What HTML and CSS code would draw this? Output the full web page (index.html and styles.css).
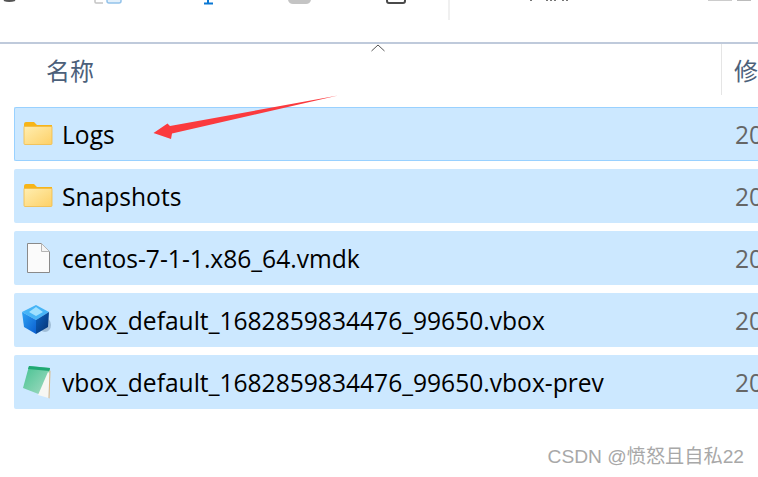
FILE: index.html
```html
<!DOCTYPE html>
<html lang="zh-CN">
<head>
    <meta charset="UTF-8">
    <meta name="viewport" content="width=device-width, initial-scale=1.0">
    <title>Logs</title>
    <link rel="stylesheet" href="styles.css">
</head>
<body>
    <!-- what is left of the ribbon, cut off by the top edge -->
    <svg class="ribbon" width="758" height="42" viewBox="0 0 758 42">
        <path d="M4 0 Q9 2 15 0" fill="none" stroke="#555" stroke-width="2"/>
        <path d="M95 0V2Q95 3 96 3H103" fill="none" stroke="#c4c4c4" stroke-width="1.500"/>
        <path d="M107 0V1Q107 3 109 3H119Q121 3 121 1V0" fill="#e3f0fb" stroke="#93c2ea" stroke-width="1.500"/>
        <path d="M208 0V3M204 3.500H213" fill="none" stroke="#0a78d4" stroke-width="2"/>
        <path d="M288 0Q289 4 293 4H306Q310 4 311 0Z" fill="#c4c4c4"/>
        <path d="M387 0V1Q387 3 389 3H403Q405 3 405 1V0" fill="none" stroke="#4a4a4a" stroke-width="2"/>
        <rect x="448" y="0" width="2" height="20" fill="#f0f0f0"/>
        <path d="M531 0V1M547 0V1M551 0V1M555 0V1M563 0V1M567 0V1" stroke="#777" stroke-width="2"/>
        <rect x="708" y="0" width="24" height="1" fill="#ccc"/>
        <rect x="737" y="0" width="14" height="1" fill="#bbb"/>
    </svg>

    <div class="list-head">
        <svg class="sort-mark" width="16" height="8" viewBox="0 0 16 8">
            <path d="M1.500 7L8 1L14.500 7" fill="none" stroke="#555" stroke-width="1"/>
        </svg>
        <div class="col-name">名称</div>
        <div class="col-date">修</div>
    </div>

    <div class="rows">
        <div class="row focused">
            <svg class="icon" width="30" height="24" viewBox="0 0 30 24"><use href="#folder"/></svg>
            <span class="name">Logs</span>
            <span class="date">20</span>
        </div>
        <div class="row">
            <svg class="icon" width="30" height="24" viewBox="0 0 30 24"><use href="#folder"/></svg>
            <span class="name">Snapshots</span>
            <span class="date">20</span>
        </div>
        <div class="row">
            <svg class="icon" width="30" height="32" viewBox="0 0 30 32">
                <path d="M4.500 1.500H18.500L26.500 9.500V30.500H4.500Z" fill="#fbfbfb" stroke="#8a8a8a" stroke-width="1"/>
                <path d="M18.500 1.500V9.500H26.500Z" fill="#f4f4f4" stroke="#b4b4b4" stroke-width="1"/>
            </svg>
            <span class="name">centos-7-1-1.x86_64.vmdk</span>
            <span class="date">20</span>
        </div>
        <div class="row">
            <svg class="icon cube" width="30" height="32" viewBox="0 0 30 32">
                <defs>
                    <linearGradient id="cube-left" x1="0" y1="0" x2="1" y2="1">
                        <stop offset="0" stop-color="#2fa4f5"/>
                        <stop offset="1" stop-color="#0a5fd0"/>
                    </linearGradient>
                    <linearGradient id="cube-right" x1="0" y1="0" x2="1" y2="1">
                        <stop offset="0" stop-color="#0b64c4"/>
                        <stop offset="1" stop-color="#05306f"/>
                    </linearGradient>
                </defs>
                <ellipse cx="22" cy="21" rx="6" ry="7" fill="#51708c" opacity="0.35"/>
                <path d="M13 1L26 8L13 16L-1 8Z" fill="#46b4f6"/>
                <path d="M-1 8L13 16V30L1 23Z" fill="url(#cube-left)"/>
                <path d="M26 8L13 16V30L25 23Z" fill="url(#cube-right)"/>
                <path d="M13 3L20 8L13 12L6 8Z" fill="#9fe0ff"/>
            </svg>
            <span class="name">vbox_default_1682859834476_99650.vbox</span>
            <span class="date">20</span>
        </div>
        <div class="row">
            <svg class="icon" width="30" height="36" viewBox="0 0 30 36">
                <defs>
                    <linearGradient id="pad-fill" x1="0" y1="0" x2="1" y2="1">
                        <stop offset="0" stop-color="#45c291"/>
                        <stop offset="1" stop-color="#a8dcc4"/>
                    </linearGradient>
                </defs>
                <path d="M6 2L27 4L26 12L18 31L0 24Z" fill="url(#pad-fill)"/>
                <path d="M6 2L27 4L26.500 7L5 5Z" fill="#1fa873"/>
                <path d="M25 8L26.500 9L25.500 34L15 31Z" fill="#f7f7f3"/>
                <path d="M26.500 6L27.500 7L26.500 34.500L25.500 34Z" fill="#dcb682"/>
            </svg>
            <span class="name">vbox_default_1682859834476_99650.vbox-prev</span>
            <span class="date">20</span>
        </div>
    </div>

    <svg class="defs" width="0" height="0">
        <defs>
            <linearGradient id="folder-fill" x1="0" y1="0" x2="1" y2="1">
                <stop offset="0" stop-color="#ffeeb0"/>
                <stop offset="1" stop-color="#fdd067"/>
            </linearGradient>
            <g id="folder">
                <path d="M1 2Q1 0 3 0H11L14 3H29V8H1Z" fill="#f7b518"/>
                <path d="M1 4.500H29V21.500Q29 22.500 28 22.500H2Q1 22.500 1 21.500Z" fill="url(#folder-fill)" stroke="#f2bb45" stroke-width="0.800"/>
            </g>
        </defs>
    </svg>

    <svg class="arrow" width="758" height="160" viewBox="0 0 758 160">
        <polygon points="153.500,133 167.500,123.500 170,126 338,95.500 172,133.500 171,139" fill="#fb3a3e"/>
    </svg>

    <div class="watermark">CSDN @愤怒且自私22</div>
</body>
</html>
```

FILE: styles.css
```css
html, body {
    margin: 0;
    padding: 0;
    height: 100%;
    background-color: #fff;
    overflow: hidden;
}
body {
    position: relative;
    width: 758px;
    height: 477px;
    font-family: "Open Sans", "Noto Sans CJK SC", sans-serif;
}
.ribbon {
    display: block;
}
.list-head {
    position: relative;
    display: flex;
    height: 51px;
    border-top: 2px solid #bfcadb;
    font-family: "Noto Sans CJK SC", sans-serif;
    font-size: 24px;
    color: #4c607a;
}
.sort-mark {
    position: absolute;
    left: 370px;
    top: 0;
}
.col-name {
    flex: none;
    width: 675px;
    margin-left: 46px;
    line-height: 52px;
}
.col-date {
    flex: none;
    width: 36px;
    box-sizing: border-box;
    padding-left: 12px;
    border-left: 1px solid #e5e5e5;
    line-height: 52px;
    white-space: nowrap;
}
.rows {
    display: flex;
    flex-direction: column;
    gap: 8px;
    margin-top: 12px;
    margin-left: 14px;
}
.row {
    display: flex;
    align-items: center;
    flex: none;
    width: 744px;
    height: 54px;
    box-sizing: border-box;
    padding-left: 9px;
    background-color: #cce8ff;
    border-radius: 2px 0 0 2px;
    font-size: 24.6px;
    color: #000;
}
.focused {
    border: 1px solid #99d1ff;
    border-right: none;
    padding-left: 8px;
}
.icon {
    flex: none;
    margin-right: 9px;
}
.cube {
    overflow: visible;
}
.name {
    flex: none;
    width: 673px;
    white-space: nowrap;
}
.date {
    flex: none;
    width: 23px;
    color: #666;
    white-space: nowrap;
    overflow: hidden;
}
.defs {
    position: absolute;
}
.arrow {
    position: absolute;
    left: 0;
    top: 0;
}
.watermark {
    position: absolute;
    right: 14px;
    top: 445px;
    font-family: "Liberation Sans", "Noto Sans CJK SC", sans-serif;
    font-size: 19.200px;
    line-height: 24px;
    color: #a8a8a8;
}
```
